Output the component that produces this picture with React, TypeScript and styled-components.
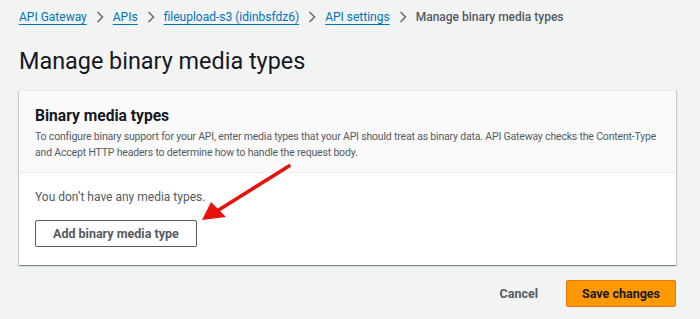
import styled, { createGlobalStyle } from 'styled-components';

const Global = createGlobalStyle`
  html, body {
    margin: 0;
    padding: 0;
    background: #f2f3f3;
    font-family: Roboto, "Noto Sans", sans-serif;
    color: #16191f;
  }
`

const Page = styled.div`
  position: relative;
  width: 700px;
  height: 319px;
  padding: 0 24px 0 19px;
  box-sizing: border-box;
  overflow: hidden;
`
const Crumbs = styled.nav`
  display: flex;
  align-items: center;
  gap: 8px;
  height: 34px;
  font-size: 12px;
`
const Crumb = styled.a<{ $current?: boolean }>`
  color: ${p => (p.$current ? '#545b64' : '#0073bb')};
  font-weight: ${p => (p.$current ? 500 : 400)};
  text-decoration: ${p => (p.$current ? 'none' : 'underline')};
  text-underline-offset: 3px;
`
const Sep = styled.svg`
  width: 10px;
  height: 12px;
  flex: none;
`
const Title = styled.h1`
  margin: 12px 0 14px;
  font-size: 23.4px;
  font-weight: 400;
  line-height: 30px;
`
const Card = styled.section`
  background: #fff;
  box-shadow: 0 1px 1px 0 rgba(0, 28, 36, 0.3), 1px 1px 1px 0 rgba(0, 28, 36, 0.15), -1px 1px 1px 0 rgba(0, 28, 36, 0.15);
  border-top: 1px solid #eaeded;
`
const CardHeader = styled.header`
  padding: 14px 16px 11px;
  background: #fafafa;
  border-bottom: 1px solid #eaeded;
`
const CardTitle = styled.h2`
  margin: 0 0 2px;
  font-size: 15.6px;
  font-weight: 700;
  line-height: 22px;
`
const Desc = styled.p`
  margin: 0;
  font-size: 10.5px;
  letter-spacing: -0.18px;
  line-height: 16px;
  color: #545b64;
`
const CardBody = styled.div`
  padding: 15px 16px 18px;
`
const Empty = styled.p`
  margin: 0 0 14px;
  font-size: 12px;
  line-height: 18px;
  color: #545b64;
`
const Button = styled.button<{ $primary?: boolean; $plain?: boolean }>`
  font-family: inherit;
  font-size: 12.5px;
  font-weight: 700;
  height: 27px;
  padding: 0 ${p => (p.$primary ? 15 : 17)}px;
  border-radius: 2px;
  cursor: pointer;
  color: ${p => (p.$primary ? '#16191f' : '#545b64')};
  background: ${p => (p.$primary ? '#ff9900' : 'transparent')};
  border: 1px solid ${p => (p.$primary ? '#ec7211' : p.$plain ? 'transparent' : '#545b64')};
`
const Footer = styled.div`
  display: flex;
  justify-content: flex-end;
  align-items: center;
  gap: 10px;
  margin-top: 15px;
`
const Arrow = styled.svg`
  position: absolute;
  left: 190px;
  top: 160px;
  width: 110px;
  height: 70px;
  pointer-events: none;
`

function Chevron() {
  return (
    <Sep viewBox="0 0 10 12">
      <path d="M2.5 1 L7.5 6 L2.5 11" fill="none" stroke="#687078" strokeWidth="1.6" />
    </Sep>
  )
}

export default function App() {
  const crumbs = ['API Gateway', 'APIs', 'fileupload-s3 (idinbsfdz6)', 'API settings']
  return (
    <Page>
      <Global />
      <Crumbs>
        {crumbs.map(c => (
          <>
            <Crumb key={c}>{c}</Crumb>
            <Chevron />
          </>
        ))}
        <Crumb $current>Manage binary media types</Crumb>
      </Crumbs>
      <Title>Manage binary media types</Title>
      <Card>
        <CardHeader>
          <CardTitle>Binary media types</CardTitle>
          <Desc>
            To configure binary support for your API, enter media types that your API should treat as binary data. API Gateway checks the Content-Type
            <br />
            and Accept HTTP headers to determine how to handle the request body.
          </Desc>
        </CardHeader>
        <CardBody>
          <Empty>You don’t have any media types.</Empty>
          <Button>Add binary media type</Button>
        </CardBody>
      </Card>
      <Footer>
        <Button $plain>Cancel</Button>
        <Button $primary>Save changes</Button>
      </Footer>
      <Arrow viewBox="0 0 110 70">
        <line x1="99" y1="6" x2="27" y2="51" stroke="#e8120c" strokeWidth="3.6" strokeLinecap="round" />
        <polygon points="12,60 21,42 36,57" fill="#e8120c" />
      </Arrow>
    </Page>
  )
}
